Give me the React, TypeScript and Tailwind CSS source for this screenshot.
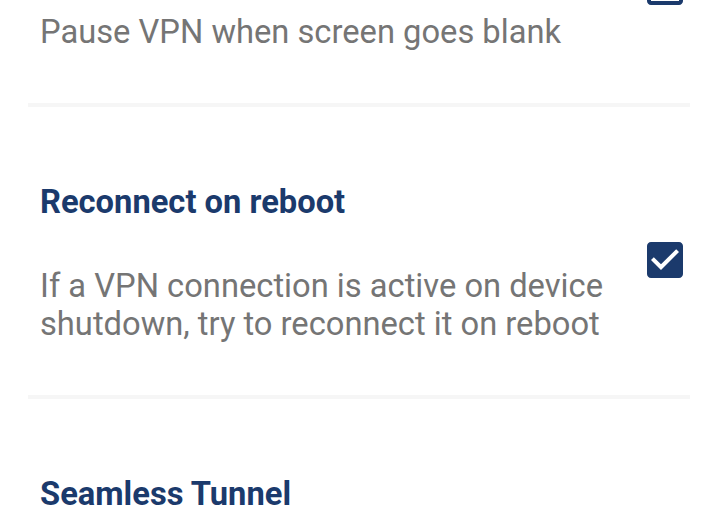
import React from "react";

type Setting = {
    title?: string;
    description?: string;
    checked: boolean;
};

// list is scrolled: the first title and last description sit outside the view
const settings: Setting[] = [
    {
        description: "Pause VPN when screen goes blank",
        checked: false,
    },
    {
        title: "Reconnect on reboot",
        description:
            "If a VPN connection is active on device shutdown, try to reconnect it on reboot",
        checked: true,
    },
    {
        title: "Seamless Tunnel",
        checked: false,
    },
];

function CheckBox({ checked }: { checked: boolean }) {
    return (
        <svg
            width="48"
            height="48"
            viewBox="0 0 24 24"
            className="shrink-0 mb-[6px] text-[#1b3a6c]"
            fill="currentColor"
        >
            {checked ? (
                <path d="M19 3H5c-1.11 0-2 .9-2 2v14c0 1.1.89 2 2 2h14c1.11 0 2-.9 2-2V5c0-1.1-.89-2-2-2zm-9 14l-5-5 1.41-1.41L10 14.17l7.59-7.59L19 8l-9 9z" />
            ) : (
                <path d="M19 5v14H5V5h14m0-2H5c-1.11 0-2 .9-2 2v14c0 1.1.89 2 2 2h14c1.1 0 2-.9 2-2V5c0-1.1-.9-2-2-2z" />
            )}
        </svg>
    );
}

export default function App() {
    return (
        <div className="w-[720px] h-[510px] overflow-hidden bg-white font-['Roboto',sans-serif]">
            <div className="-mt-[147px]">
                {settings.map((item, i) => (
                    <div key={i}>
                        {i > 0 && (
                            <div className="h-[4px] ml-[28px] mr-[30px] bg-[#f6f6f6]" />
                        )}
                        <div className="flex items-center pl-[40px] pr-[31px] pt-[76px] pb-[52px]">
                            <div className="flex-1 pr-[30px]">
                                {item.title ? (
                                    <h2 className="text-[32.7px] leading-[38px] font-bold text-[#1b3a6c] mb-[46px]">
                                        {item.title}
                                    </h2>
                                ) : (
                                    <div className="h-[38px] mb-[46px]" />
                                )}
                                {item.description ? (
                                    <p className="text-[32.7px] leading-[38px] text-[#757575]">
                                        {item.description}
                                    </p>
                                ) : (
                                    <div className="h-[76px]" />
                                )}
                            </div>
                            <CheckBox checked={item.checked} />
                        </div>
                    </div>
                ))}
            </div>
        </div>
    );
}
